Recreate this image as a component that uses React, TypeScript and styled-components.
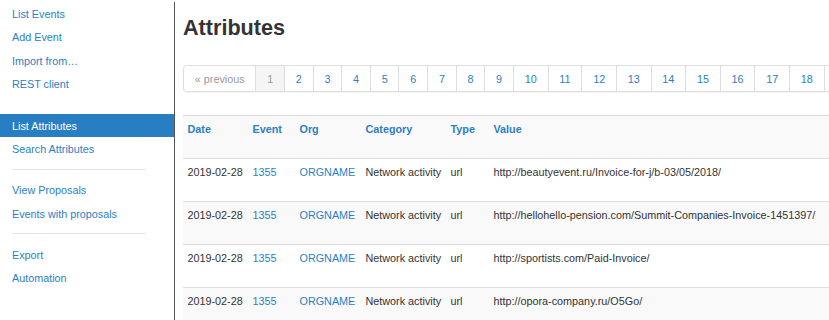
import React from "react";
import styled, { createGlobalStyle } from "styled-components";

const Global = createGlobalStyle`
  html, body { margin: 0; padding: 0; background: #fff; }
  body {
    font-family: "Liberation Sans", Arial, Helvetica, sans-serif;
    font-size: 10.8px;
    line-height: 18px;
    color: #333;
    overflow: hidden;
  }
`;

const LINK = "#2a7fc3";

const Page = styled.div`
  display: flex;
  align-items: flex-start;
  width: 829px;
  height: 320px;
  overflow: hidden;
`;

const Sidebar = styled.nav`
  flex: 0 0 174px;
  margin-top: 2px;
  padding-top: 0.4px;
  min-height: 318px;
  border-right: 1px solid #555;
  display: flex;
  flex-direction: column;
`;

const NavItem = styled.a<{ $active?: boolean }>`
  display: block;
  padding: 2.7px 12px;
  line-height: 18px;
  color: ${(p) => (p.$active ? "#fff" : LINK)};
  background: ${(p) => (p.$active ? "#277ec2" : "transparent")};
  text-decoration: none;
  white-space: nowrap;
`;

const Divider = styled.div<{ $hidden?: boolean }>`
  height: 1px;
  margin: 8px 28px 9px 12px;
  background: ${(p) => (p.$hidden ? "transparent" : "#e5e5e5")};
`;

const Main = styled.main`
  flex: 1 1 auto;
  min-width: 0;
  overflow: hidden;
  padding-left: 8px;
`;

const Title = styled.h2`
  margin: 10.4px 0 0;
  font-size: 21.6px;
  line-height: 36px;
  font-weight: bold;
  color: #333;
`;

const Pagination = styled.ul`
  display: inline-flex;
  margin: 18.6px 0 0;
  padding: 0;
  list-style: none;
  white-space: nowrap;
  border-radius: 3.6px;
  box-shadow: 0 1px 2px rgba(0, 0, 0, 0.05);
`;

const PageItem = styled.li<{ $state?: "active" | "disabled"; $first?: boolean }>`
  display: block;
  padding: 3.6px 10.8px;
  line-height: 18px;
  border: 1px solid #ddd;
  border-left-width: ${(p) => (p.$first ? "1px" : "0")};
  border-radius: ${(p) => (p.$first ? "3.6px 0 0 3.6px" : "0")};
  background: ${(p) => (p.$state === "active" ? "#f5f5f5" : "#fff")};
  color: ${(p) => (p.$state ? "#999" : LINK)};
`;

const Table = styled.table`
  margin-top: 22.8px;
  border-collapse: collapse;
  table-layout: fixed;
  width: 900px;
`;

const Row = styled.tr<{ $striped?: boolean }>`
  background: ${(p) => (p.$striped ? "#f9f9f9" : "#fff")};
`;

const Cell = styled.td<{ $head?: boolean; $link?: boolean }>`
  padding: 3.6px 4.5px;
  height: 34.8px;
  vertical-align: top;
  text-align: left;
  border-top: 1px solid #ddd;
  line-height: 18px;
  white-space: nowrap;
  overflow: hidden;
  font-weight: ${(p) => (p.$head ? "bold" : "normal")};
  color: ${(p) => (p.$head || p.$link ? LINK : "#333")};
`;

const rows = [
  "http://beautyevent.ru/Invoice-for-j/b-03/05/2018/",
  "http://hellohello-pension.com/Summit-Companies-Invoice-1451397/",
  "http://sportists.com/Paid-Invoice/",
  "http://opora-company.ru/O5Go/",
];

const widths = [65, 47, 66, 85, 43, 594];

export default function App() {
  const pages = Array.from({ length: 18 }, (_, i) => i + 1);
  return (
    <>
      <Global />
      <Page>
        <Sidebar>
          <NavItem>List Events</NavItem>
          <NavItem>Add Event</NavItem>
          <NavItem>Import from…</NavItem>
          <NavItem>REST client</NavItem>
          <Divider $hidden />
          <NavItem $active>List Attributes</NavItem>
          <NavItem>Search Attributes</NavItem>
          <Divider />
          <NavItem>View Proposals</NavItem>
          <NavItem>Events with proposals</NavItem>
          <Divider />
          <NavItem>Export</NavItem>
          <NavItem>Automation</NavItem>
        </Sidebar>
        <Main>
          <Title>Attributes</Title>
          <Pagination>
            <PageItem $first $state="disabled">« previous</PageItem>
            {pages.map((n) => (
              <PageItem key={n} $state={n === 1 ? "active" : undefined}>
                {n}
              </PageItem>
            ))}
            <PageItem aria-hidden>&nbsp;&nbsp;</PageItem>
          </Pagination>
          <Table>
            <colgroup>
              {widths.map((w, i) => (
                <col key={i} style={{ width: w }} />
              ))}
            </colgroup>
            <tbody>
              <Row $striped>
                <Cell $head>Date</Cell>
                <Cell $head>Event</Cell>
                <Cell $head>Org</Cell>
                <Cell $head>Category</Cell>
                <Cell $head>Type</Cell>
                <Cell $head>Value</Cell>
              </Row>
              {rows.map((v, i) => (
                <Row key={i} $striped={i % 2 === 1}>
                  <Cell>2019-02-28</Cell>
                  <Cell $link>1355</Cell>
                  <Cell $link>ORGNAME</Cell>
                  <Cell>Network activity</Cell>
                  <Cell>url</Cell>
                  <Cell>{v}</Cell>
                </Row>
              ))}
            </tbody>
          </Table>
        </Main>
      </Page>
    </>
  );
}
